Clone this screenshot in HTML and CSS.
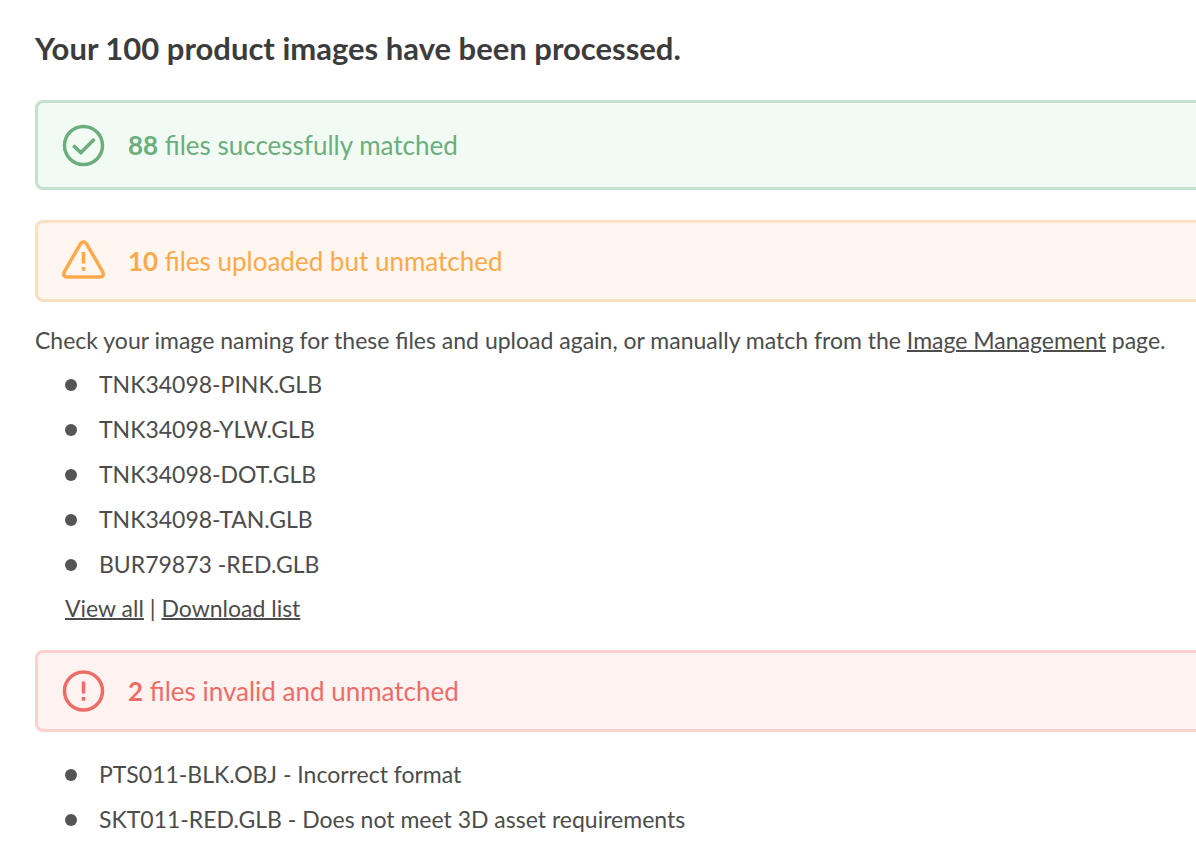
FILE: index.html
```html
<!doctype html>
<html lang="en">
<head>
<meta charset="utf-8">
<title>Image upload results</title>
<link rel="stylesheet" href="styles.css">
</head>

<body>

<main class="results">

<h1>Your 100 product images have been processed.</h1>

<section>
  <h2 class="alert alert-success">
    <svg class="icon" viewBox="0 0 44 44" aria-hidden="true">
      <circle cx="21.5" cy="22.5" r="19"/>
      <path d="M11.3 22.5 L18.8 29.8 L32.5 16"/>
    </svg>
    <span><b>88</b> files successfully matched</span>
  </h2>
</section>

<section>
  <h2 class="alert alert-warning">
    <svg class="icon" viewBox="0 0 44 44" aria-hidden="true">
      <path d="M18.6 4.6 Q21.5 .8 24.4 4.6 L40.7 32.8 Q42.6 37.9 37.9 38 H5.1 Q.4 37.9 2.3 32.8 Z"/>
      <path d="M21.5 13 V24.5 M21.5 28 V31.8"/>
    </svg>
    <span><b>10</b> files uploaded but unmatched</span>
  </h2>

  <p>Check your image naming for these files and upload again, or manually match from the <a href="#">Image Management</a> page.</p>

  <ul>
    <li>TNK34098-PINK.GLB</li>
    <li>TNK34098-YLW.GLB</li>
    <li>TNK34098-DOT.GLB</li>
    <li>TNK34098-TAN.GLB</li>
    <li>BUR79873 -RED.GLB</li>
  </ul>

  <p class="list-links"><a href="#">View all</a> | <a href="#">Download list</a></p>
</section>

<section>
  <h2 class="alert alert-error">
    <svg class="icon" viewBox="0 0 44 44" aria-hidden="true">
      <circle cx="21.5" cy="22" r="19"/>
      <path d="M21.5 12.5 V24.5 M21.5 28 V31.8"/>
    </svg>
    <span><b>2</b> files invalid and unmatched</span>
  </h2>

  <ul>
    <li>PTS011-BLK.OBJ - Incorrect format</li>
    <li>SKT011-RED.GLB - Does not meet 3D asset requirements</li>
  </ul>
</section>

</main>

</body>
</html>
```
FILE: styles.css
```css
body {
  margin: 0;
  color: #4c4c4c;
  background-color: #fff;
  font-family: Lato, "Liberation Sans", sans-serif;
  font-size: 23px;
  line-height: 45px;
}

.results {
  padding: 26px 0 0 35px;
}

h1 {
  margin: 0 0 30px;
  color: #3c3c3c;
  font-size: 31px;
  font-weight: bold;
  line-height: 44px;
}

/* the boxes run on to the right edge of the window */
.alert {
  display: flex;
  align-items: center;
  gap: 22px;
  box-sizing: border-box;
  min-height: 82px;
  margin: 0 0 16px;
  padding: 16px 25px 16px 24px;
  border: 3px solid;
  border-right: 0;
  border-radius: 8px 0 0 8px;
  font-size: 26px;
  font-weight: normal;
  line-height: 44px;
}

.alert-success {
  min-height: 90px;
  margin-bottom: 30px;
  color: #6bae7b;
  background-color: #f1fbf4;
  border-color: #c5e0cd;
}

.alert-warning {
  color: #fba94c;
  background-color: #fff6ef;
  border-color: #fbdfc1;
}

.alert-error {
  margin-bottom: 20px;
  color: #ee6c67;
  background-color: #fff3f2;
  border-color: #ffd0ce;
}

.icon {
  flex: none;
  width: 44px;
  height: 44px;
  fill: none;
  stroke: currentColor;
  stroke-width: 3.5;
  stroke-linejoin: round;
}

p {
  margin: 0;
  line-height: 44px;
}

a {
  color: inherit;
  text-decoration: underline;
  text-decoration-thickness: 2px;
  text-underline-offset: 1px;
}

ul {
  margin: 0;
  padding: 0 0 0 30px;
  list-style: none;
}

li {
  display: flex;
  align-items: center;
  gap: 22px;
}

li::before {
  content: "";
  width: 12px;
  height: 12px;
  background-color: #555;
  border-radius: 50%;
}

.list-links {
  margin: 0 0 20px;
  padding-left: 30px;
  line-height: 43px;
}
```
